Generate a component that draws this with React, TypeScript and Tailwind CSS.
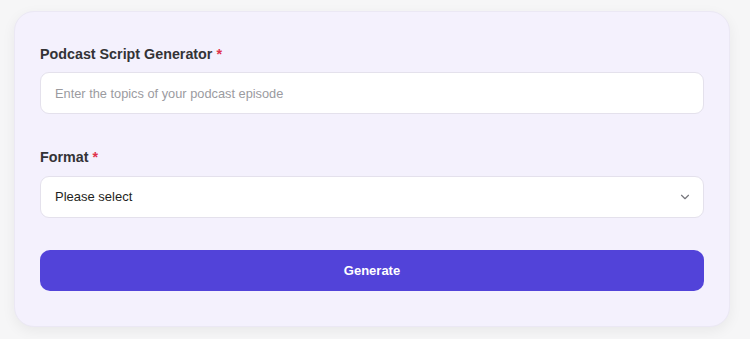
import { ChevronDown } from "lucide-react";

export default function App() {
    return (
        <div className="min-h-[339px] bg-[#f6f6f7] pt-[11px] pl-[14px] pr-[20px] pb-[12px] font-['Liberation_Sans',Arial,sans-serif]">
            <div className="w-[716px] h-[316px] bg-[#f4f1fd] border border-[#ebe8f4] rounded-[20px] shadow-[0_4px_14px_rgba(0,0,0,0.06)] px-[25px] pt-[32px]">
                {/* Topic */}
                <label className="block text-[14.3px] leading-[20px] font-bold text-[#333336]">
                    Podcast Script Generator <span className="text-[#e0314b]">*</span>
                </label>
                <input
                    type="text"
                    placeholder="Enter the topics of your podcast episode"
                    className="mt-[8px] block w-full h-[42px] px-[14px] bg-white border border-[#e4e1ec] rounded-[9px] text-[12.8px] text-[#222] placeholder-[#9b9b9f] outline-none"
                />

                {/* Format */}
                <label className="block mt-[33px] text-[14.3px] leading-[20px] font-bold text-[#333336]">
                    Format <span className="text-[#e0314b]">*</span>
                </label>
                <div className="relative mt-[9px]">
                    <select className="block w-full h-[42px] px-[14px] bg-white border border-[#e4e1ec] rounded-[9px] text-[13px] text-[#1f1f22] appearance-none outline-none">
                        <option>Please select</option>
                    </select>
                    <ChevronDown className="absolute right-[12px] top-1/2 -translate-y-1/2 h-[14px] w-[14px] text-[#77777d] pointer-events-none" />
                </div>

                <button className="mt-[32px] w-full h-[41px] bg-[#5243d9] rounded-[10px] text-white text-[13px] font-bold">
                    Generate
                </button>
            </div>
        </div>
    );
}
